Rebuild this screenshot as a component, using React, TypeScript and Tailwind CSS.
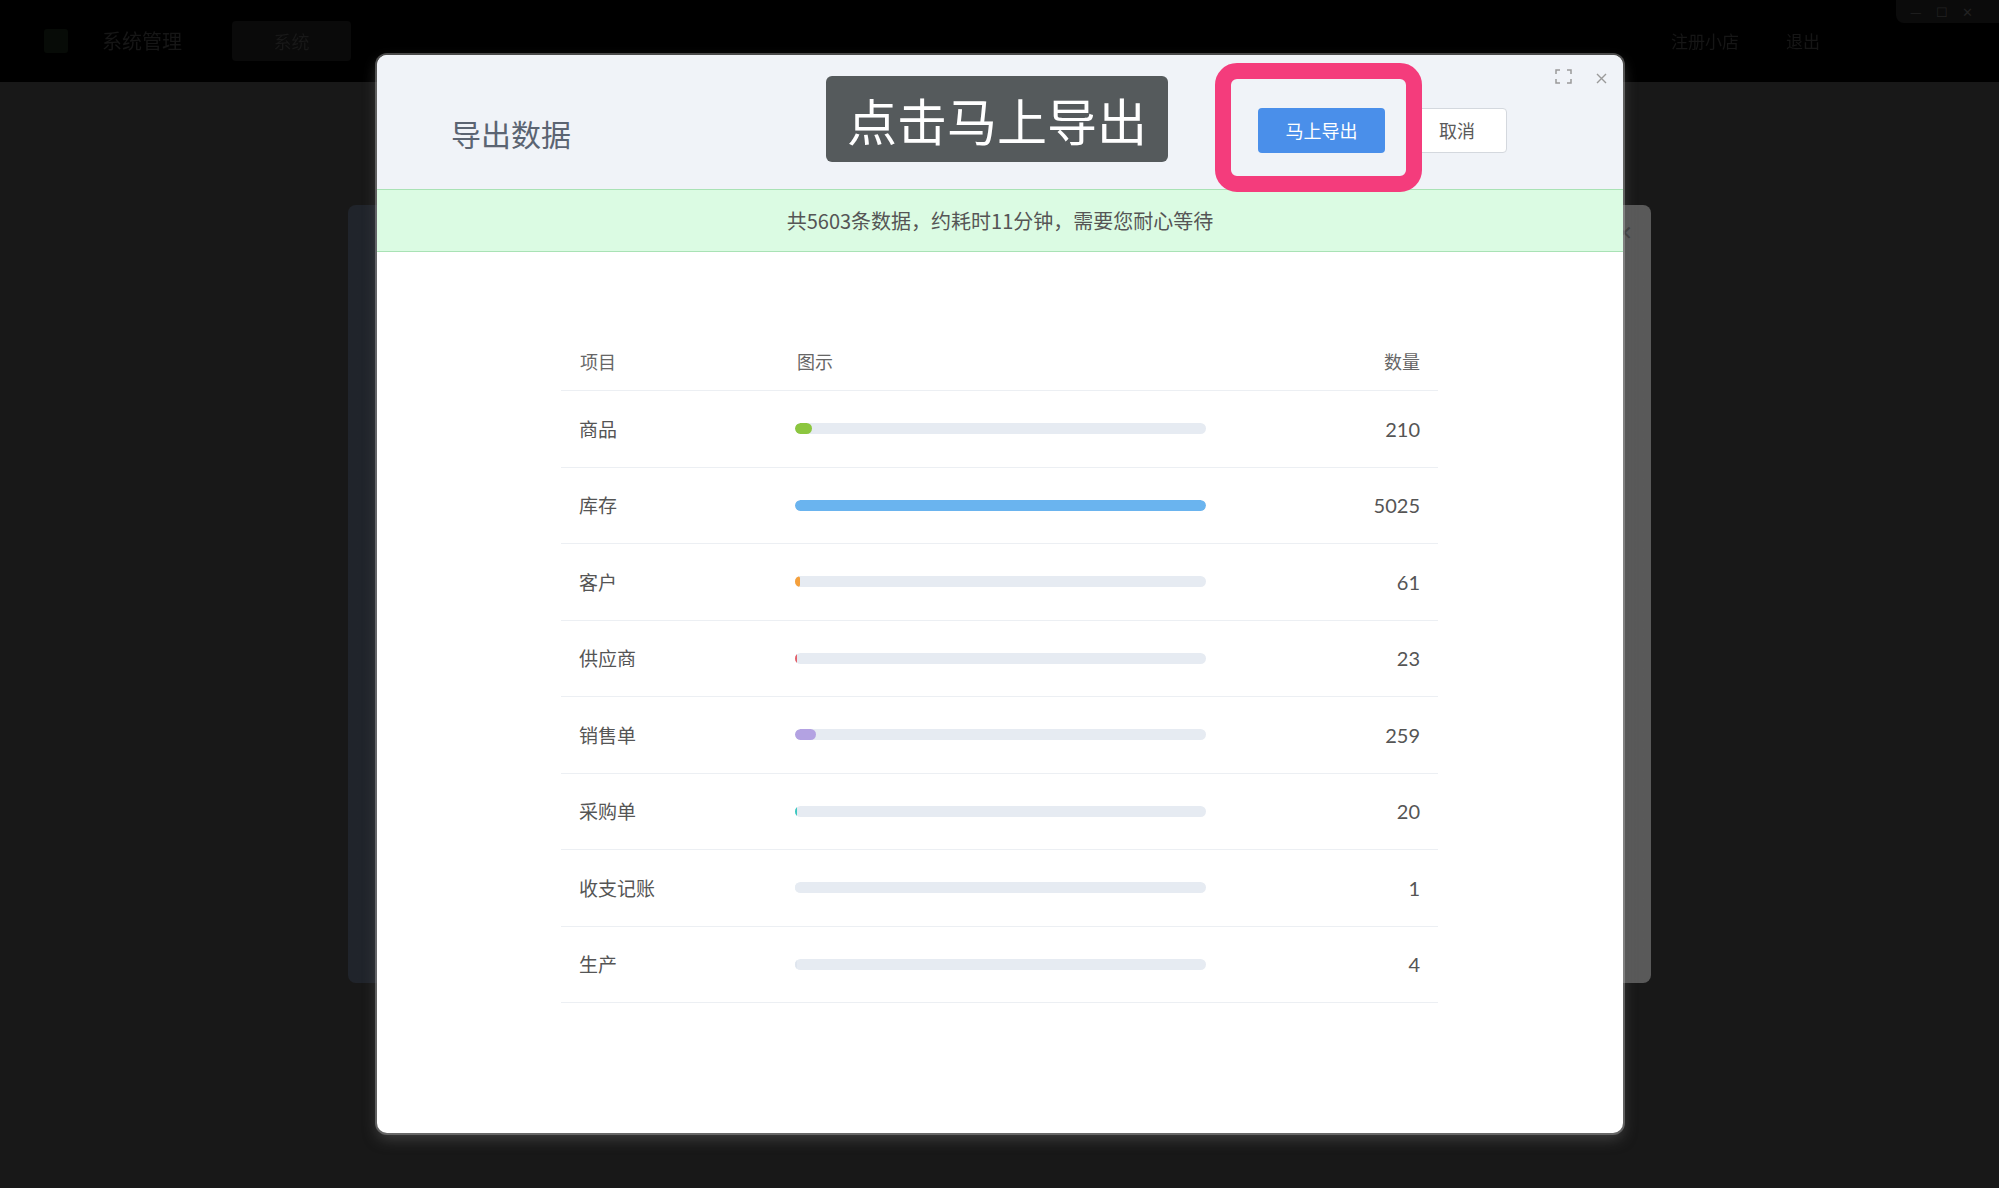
import React from "react"

const rows = [
  { name: "商品", count: 210, color: "#8cc63f" },
  { name: "库存", count: 5025, color: "#6ab4ef" },
  { name: "客户", count: 61, color: "#f5a03c" },
  { name: "供应商", count: 23, color: "#e4606a" },
  { name: "销售单", count: 259, color: "#b3a2e2" },
  { name: "采购单", count: 20, color: "#3cc8c0" },
  { name: "收支记账", count: 1, color: "#e6ebf2" },
  { name: "生产", count: 4, color: "#dfe5ee" },
]

const max = 5025

function FullscreenIcon() {
  return (
    <svg width="17" height="15" viewBox="0 0 17 15" fill="none" stroke="#9a9a9a" strokeWidth="1.5">
      <path d="M1 5V1h4M12 1h4v4M16 10v4h-4M5 14H1v-4" />
    </svg>
  )
}

function CloseIcon() {
  return (
    <svg width="11" height="11" viewBox="0 0 11 11" fill="none" stroke="#9a9a9a" strokeWidth="1.4">
      <path d="M1 1l9 9M10 1l-9 9" />
    </svg>
  )
}

export default function App() {
  return (
    <div className="relative w-[1999px] h-[1188px] overflow-hidden bg-[#181818] font-['Noto_Sans_CJK_SC',sans-serif]">
      {/* top bar, dimmed */}
      <div className="flex items-center h-[82px] bg-black">
        <div className="ml-[44px] w-[24px] h-[24px] rounded-[3px] bg-[#070b07]" />
        <span className="ml-[34px] text-[20px] text-[#161616] blur-[0.6px]">系统管理</span>
        <div className="ml-[50px] flex items-center justify-center w-[119px] h-[40px] rounded-[4px] bg-[#0a0a0a]">
          <span className="text-[18px] text-[#181818] blur-[0.6px]">系统</span>
        </div>
        <span className="ml-auto text-[17px] text-[#161616] blur-[0.6px]">注册小店</span>
        <span className="ml-[47px] mr-[179px] text-[17px] text-[#161616] blur-[0.6px]">退出</span>
      </div>
      <div className="absolute right-0 top-0 flex items-center gap-[14px] px-[14px] h-[23px] w-[103px] rounded-bl-[8px] bg-[#0b0b0b] text-[13px] leading-none text-[#222]">
        <span>—</span>
        <span>☐</span>
        <span>✕</span>
      </div>

      {/* dialog behind */}
      <div className="absolute left-[348px] top-[205px] w-[1303px] h-[778px] rounded-[8px] bg-linear-to-r from-[#20242b] from-50% to-[#595959] to-50%">
        <span className="absolute right-[18px] top-[12px] text-[20px] text-[#3e3e3e]">✕</span>
      </div>

      {/* export modal */}
      <div className="absolute left-[377px] top-[55px] w-[1246px] h-[1078px] flex flex-col rounded-[10px] overflow-hidden bg-white shadow-[0_0_0_2px_rgba(200,200,200,0.35),0_6px_14px_rgba(90,90,90,0.6)]">
        <div className="flex items-start h-[134px] shrink-0 bg-[#f0f3f8]">
          <div className="pl-[74px] pt-[60px] text-[30px] leading-[36px] text-[#5b6472]">导出数据</div>
          <div className="ml-auto mt-[53px] flex gap-[22px]">
            <button className="w-[127px] h-[45px] rounded-[4px] bg-[#4a8fea] text-[18px] text-white">马上导出</button>
            <button className="w-[100px] h-[45px] rounded-[4px] bg-white border border-[#d4d8de] text-[18px] text-[#5a5a5a]">取消</button>
          </div>
          <div className="ml-[48px] mr-[16px] mt-[14px] flex items-start gap-[24px]">
            <FullscreenIcon />
            <div className="mt-[4px]">
              <CloseIcon />
            </div>
          </div>
        </div>

        <div className="flex items-center justify-center h-[63px] shrink-0 border-y border-[#a9e2b5] bg-[#dbfbe3] text-[20px] text-[#555]">
          共5603条数据，约耗时11分钟，需要您耐心等待
        </div>

        <div className="pt-[81px] pl-[184px]">
          <div className="w-[877px]">
            <div className="flex items-center h-[58px] border-b border-[#eceff3] text-[18px] text-[#666]">
              <span className="w-[236px] pl-[19px]">项目</span>
              <span className="flex-1">图示</span>
              <span className="pr-[18px]">数量</span>
            </div>
            {rows.map((row, i) => (
              <div key={i} className="flex items-center h-[76.5px] border-b border-[#eceff3]">
                <span className="w-[234px] pl-[18px] text-[19px] text-[#555]">{row.name}</span>
                <div className="w-[411px] h-[11px] rounded-full bg-[#e6ebf2] overflow-hidden">
                  <div
                    className="h-full rounded-full"
                    style={{ width: `${Math.max((row.count / max) * 100, 0.4)}%`, backgroundColor: row.color }}
                  />
                </div>
                <span className="ml-auto pr-[18px] font-['Lato',sans-serif] text-[20px] text-[#555]">{row.count}</span>
              </div>
            ))}
          </div>
        </div>
      </div>

      {/* annotations */}
      <div className="absolute left-[826px] top-[76px] flex items-center justify-center w-[342px] h-[86px] rounded-[6px] bg-[#555a5c] text-[50px] leading-none text-white">
        点击马上导出
      </div>
      <div className="absolute left-[1215px] top-[63px] w-[207px] h-[129px] rounded-[22px] border-[16px] border-[#f43c7c]" />
    </div>
  )
}
